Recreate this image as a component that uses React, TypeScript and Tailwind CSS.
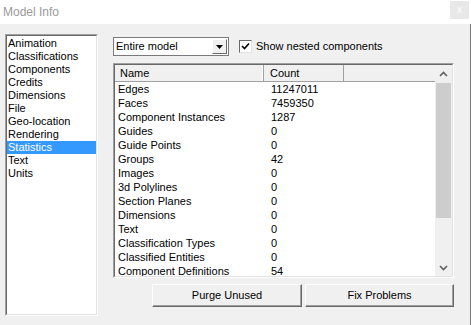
import React from "react";

const categories = [
  "Animation",
  "Classifications",
  "Components",
  "Credits",
  "Dimensions",
  "File",
  "Geo-location",
  "Rendering",
  "Statistics",
  "Text",
  "Units",
];

const stats: [string, string][] = [
  ["Edges", "11247011"],
  ["Faces", "7459350"],
  ["Component Instances", "1287"],
  ["Guides", "0"],
  ["Guide Points", "0"],
  ["Groups", "42"],
  ["Images", "0"],
  ["3d Polylines", "0"],
  ["Section Planes", "0"],
  ["Dimensions", "0"],
  ["Text", "0"],
  ["Classification Types", "0"],
  ["Classified Entities", "0"],
  ["Component Definitions", "54"],
];

// classic win32 sunken frame: two nested 1px borders
function Sunken({ className, children }: { className: string; children: React.ReactNode }) {
  return (
    <div className={`border border-t-[#a0a0a0] border-l-[#a0a0a0] border-r-white border-b-white ${className}`}>
      <div className="flex h-full w-full border border-t-[#696969] border-l-[#696969] border-r-[#e3e3e3] border-b-[#e3e3e3] bg-white">
        {children}
      </div>
    </div>
  );
}

function Button({ label, className }: { label: string; className: string }) {
  return (
    <button
      className={`flex h-[23px] items-center justify-center border border-t-white border-l-white border-r-[#696969] border-b-[#696969] bg-[#f0f0f0] text-[11px] text-black shadow-[inset_-1px_-1px_0_#a0a0a0] ${className}`}
    >
      {label}
    </button>
  );
}

export default function App() {
  return (
    <div
      className="flex h-[325px] w-[471px] flex-col bg-white text-[11px] text-black"
      style={{ fontFamily: '"Liberation Sans", Arial, sans-serif' }}
    >
      {/* title bar */}
      <div className="flex h-[24px] shrink-0 items-start justify-between">
        <span className="mt-[3px] pl-[3px] text-[12px] text-[#9a9a9a]">Model Info</span>
        <div className="mr-[2px] mt-[1px] flex h-[18px] w-[19px] items-center justify-center bg-[#e8e8e8] text-[10px] leading-none text-white">
          x
        </div>
      </div>

      <div className="flex flex-1 border-r border-r-[#7a7a7a] bg-[#f0f0f0] pl-[5px] pt-[10px]">
        {/* category list */}
        <Sunken className="h-[282px] w-[93px]">
          <div className="flex w-full flex-col pt-[1px]">
            {categories.map((c) => (
              <div
                key={c}
                className={`h-[13px] pl-[1px] leading-[13px] ${c === "Statistics" ? "bg-[#3399ff] text-white" : ""}`}
              >
                {c}
              </div>
            ))}
          </div>
        </Sunken>

        <div className="ml-[15px] flex w-[341px] flex-col">
          {/* filter row */}
          <div className="mt-[3px] flex h-[19px] items-center">
            <div className="flex h-[19px] w-[116px] items-center justify-between border border-[#7a7a7a] bg-white pl-[2px] pr-[1px]">
              <span>Entire model</span>
              <div className="flex h-[15px] w-[15px] items-center justify-center border border-t-white border-l-white border-r-[#696969] border-b-[#696969] bg-[#f0f0f0]">
                <svg width="7" height="4" viewBox="0 0 7 4">
                  <path d="M0 0h7L3.5 4z" fill="#000" />
                </svg>
              </div>
            </div>
            <div className="ml-[10px] flex h-[13px] w-[13px] items-center justify-center border border-t-[#696969] border-l-[#696969] border-r-[#e3e3e3] border-b-[#e3e3e3] bg-white">
              <svg width="9" height="9" viewBox="0 0 9 9">
                <path d="M1 4l2.5 2.5L8 1.5" fill="none" stroke="#000" strokeWidth="1.6" />
              </svg>
            </div>
            <span className="ml-[4px]">Show nested components</span>
          </div>

          {/* statistics table */}
          <Sunken className="mt-[7px] h-[215px] w-[341px]">
            <div className="flex flex-1 flex-col overflow-hidden">
              <div className="flex h-[17px] shrink-0 border-b border-b-[#a0a0a0] bg-[#f0f0f0]">
                <div className="flex w-[149px] items-center border-r border-r-[#a0a0a0] pl-[5px] shadow-[inset_-1px_0_0_white]">
                  Name
                </div>
                <div className="flex w-[80px] items-center border-r border-r-[#a0a0a0] pl-[6px]">
                  Count
                </div>
                <div className="flex-1" />
              </div>
              {stats.map(([name, count]) => (
                <div key={name} className="flex h-[14px] shrink-0 items-center">
                  <span className="w-[150px] pl-[3px]">{name}</span>
                  <span className="pl-[6px]">{count}</span>
                </div>
              ))}
            </div>
            <div className="flex w-[17px] flex-col bg-[#f0f0f0]">
              <div className="flex h-[18px] items-center justify-center">
                <svg width="9" height="6" viewBox="0 0 9 6">
                  <path d="M1 5l3.5-3.5L8 5" fill="none" stroke="#606060" strokeWidth="1.6" />
                </svg>
              </div>
              <div className="mx-[1px] h-[135px] bg-[#cdcdcd]" />
              <div className="flex-1" />
              <div className="flex h-[16px] items-center justify-center">
                <svg width="9" height="6" viewBox="0 0 9 6">
                  <path d="M1 1l3.5 3.5L8 1" fill="none" stroke="#606060" strokeWidth="1.6" />
                </svg>
              </div>
            </div>
          </Sunken>

          <div className="mt-[6px] flex gap-[3px] pl-[39px]">
            <Button label="Purge Unused" className="w-[150px]" />
            <Button label="Fix Problems" className="w-[149px]" />
          </div>
        </div>
      </div>
    </div>
  );
}
